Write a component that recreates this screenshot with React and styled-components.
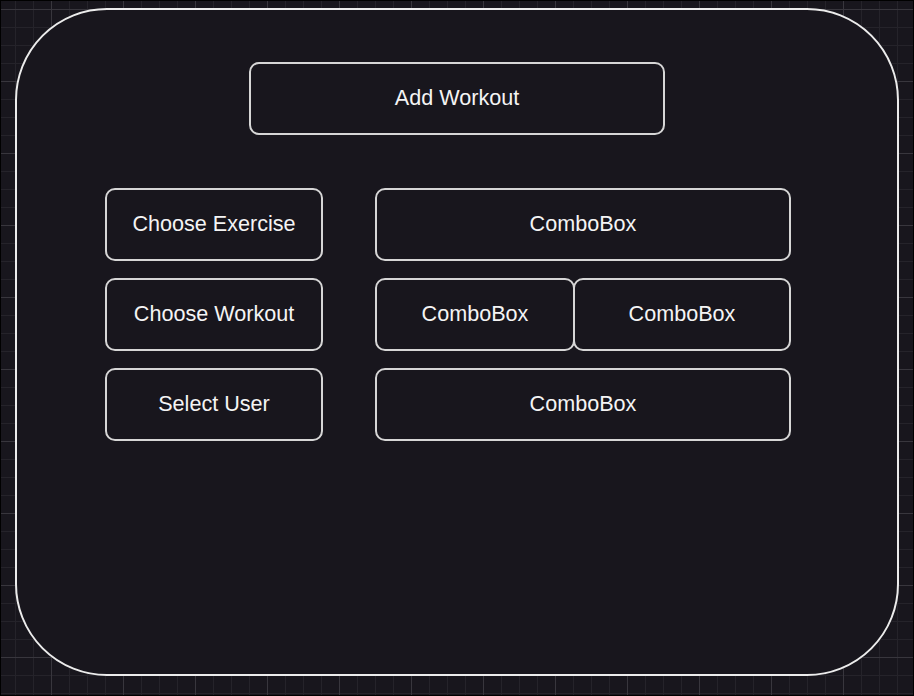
import React from "react";
import styled, { createGlobalStyle } from "styled-components";

const Global = createGlobalStyle`
  html, body { margin: 0; padding: 0; background: #18161d; }
  * { box-sizing: border-box; }
`;

const Canvas = styled.div`
  width: 914px;
  height: 696px;
  border: 1px solid #000;
  padding: 7px 0 0 14px;
  background-color: #18161d;
  background-image:
    linear-gradient(to right, #38363d 1px, transparent 1px),
    linear-gradient(to bottom, #38363d 1px, transparent 1px),
    linear-gradient(to right, #25232a 1px, transparent 1px),
    linear-gradient(to bottom, #25232a 1px, transparent 1px);
  background-size: 72px 72px, 72px 72px, 18px 18px, 18px 18px;
  background-position: 50px 8px, 50px 8px, 14px 8px, 14px 8px;
  font-family: "Liberation Sans", Arial, sans-serif;
  overflow: hidden;
`;

const Frame = styled.div`
  width: 884px;
  height: 668px;
  border: 2px solid #ececec;
  border-radius: 92px;
  background: #18161d;
  padding-top: 52px;
  display: flex;
  flex-direction: column;
  align-items: stretch;
`;

const Header = styled.div`
  display: flex;
  justify-content: center;
`;

const Box = styled.div`
  width: ${(p) => p.$w}px;
  height: 73px;
  border: 2px solid #d6d6d6;
  border-radius: 10px;
  display: flex;
  align-items: center;
  justify-content: center;
  color: #f4f4f4;
  font-size: 21.6px;
  padding-bottom: 1px;
  background: #18161d;
  flex-shrink: 0;
`;

const Grid = styled.div`
  margin-top: 53px;
  margin-left: 88px;
  display: grid;
  grid-template-columns: 218px 416px;
  column-gap: 52px;
  row-gap: 17px;
`;

const Pair = styled.div`
  display: flex;
  & > * + * { margin-left: -2px; }
`;

export default function App() {
  return (
    <>
      <Global />
      <Canvas>
        <Frame>
          <Header>
            <Box $w={416}>Add Workout</Box>
          </Header>
          <Grid>
            <Box $w={218}>Choose Exercise</Box>
            <Box $w={416}>ComboBox</Box>
            <Box $w={218}>Choose Workout</Box>
            <Pair>
              <Box $w={200}>ComboBox</Box>
              <Box $w={218}>ComboBox</Box>
            </Pair>
            <Box $w={218}>Select User</Box>
            <Box $w={416}>ComboBox</Box>
          </Grid>
        </Frame>
      </Canvas>
    </>
  );
}
